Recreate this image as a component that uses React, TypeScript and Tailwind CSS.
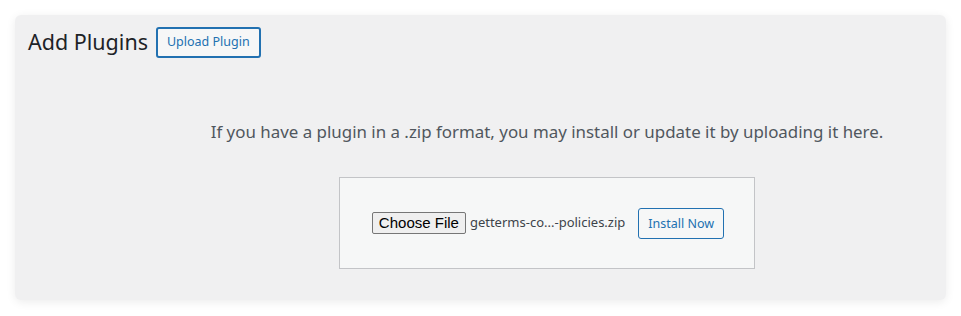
import React from 'react';

const App: React.FC = () => {
  return (
    <div className="min-h-screen w-full bg-white p-[15px] font-['Noto_Sans','Open_Sans',sans-serif]">
      {/* Panel */}
      <div className="h-[285px] w-[931px] rounded-[6px] bg-[#f0f0f1] shadow-[0_2px_10px_rgba(0,0,0,0.08)]">
        {/* Heading row */}
        <div className="flex items-center gap-[8px] pl-[13px] pt-[11px]">
          <h1 className="text-[21.5px] leading-[32px] font-normal text-[#1d2327]">Add Plugins</h1>
          <button className="h-[31px] rounded-[3px] border-2 border-[#2271b1] bg-[#f6f7f7] px-[9px] text-[12.5px] leading-[26px] text-[#2271b1]">
            Upload Plugin
          </button>
        </div>

        {/* Upload area */}
        <div className="flex flex-col items-center pl-[133px]">
          <p className="mt-[62px] text-[16.9px] leading-[24px] text-[#50575e]">
            If you have a plugin in a .zip format, you may install or update it by uploading it here.
          </p>
          <div className="mt-[33px] flex h-[92px] w-[416px] items-center justify-center border border-[#c3c4c7] bg-[#f6f7f7]">
            <div className="flex items-center pl-[2px]">
              <span className="h-[22px] rounded-[2px] border border-[#767676] bg-[#efefef] px-[6px] font-['Liberation_Sans',Arial,sans-serif] text-[15px] leading-[20px] text-black">
                Choose File
              </span>
              <span className="ml-[4px] text-[13px] text-[#3c434a]">getterms-co...-policies.zip</span>
              <button className="ml-[13px] h-[31px] rounded-[3px] border border-[#2271b1] bg-[#f6f7f7] px-[9px] text-[12.5px] leading-[29px] text-[#2271b1]">
                Install Now
              </button>
            </div>
          </div>
        </div>
      </div>
    </div>
  );
};

export default App;
